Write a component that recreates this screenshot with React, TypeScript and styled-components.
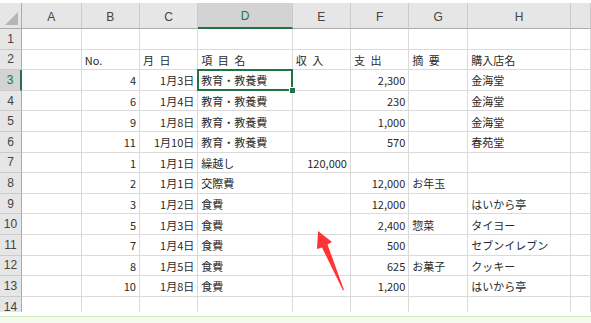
import React from "react";
import styled, { createGlobalStyle, css } from "styled-components";

const GlobalStyle = createGlobalStyle`
  html, body {
    margin: 0;
    padding: 0;
    background: #ffffff;
  }
`;

const headerBg = "#e6e6e6";
const activeHeaderBg = "#d3d3d3";
const excelGreen = "#217346";
const gridLine = "#dadada";

const columns = ["A", "B", "C", "D", "E", "F", "G", "H", ""];
const colWidths = "22px 59.7px 58.3px 58.3px 94.4px 58.3px 58.3px 59px 102.4px 1fr";

type Align = "left" | "right";
type RowData = (string | [string, Align])[];

// B..H for rows 1..14
const rows: RowData[] = [
  ["", "", "", "", "", "", ""],
  [["No.", "left"], ["月 日", "left"], "項 目 名", "収 入", ["支 出", "left"], "摘 要", "購入店名"],
  [["4", "right"], ["1月3日", "right"], "教育・教養費", "", ["2,300", "right"], "", "金海堂"],
  [["6", "right"], ["1月4日", "right"], "教育・教養費", "", ["230", "right"], "", "金海堂"],
  [["9", "right"], ["1月8日", "right"], "教育・教養費", "", ["1,000", "right"], "", "金海堂"],
  [["11", "right"], ["1月10日", "right"], "教育・教養費", "", ["570", "right"], "", "春苑堂"],
  [["1", "right"], ["1月1日", "right"], "繰越し", ["120,000", "right"], "", "", ""],
  [["2", "right"], ["1月1日", "right"], "交際費", "", ["12,000", "right"], "お年玉", ""],
  [["3", "right"], ["1月2日", "right"], "食費", "", ["12,000", "right"], "", "はいから亭"],
  [["5", "right"], ["1月3日", "right"], "食費", "", ["2,400", "right"], "惣菜", "タイヨー"],
  [["7", "right"], ["1月4日", "right"], "食費", "", ["500", "right"], "", "セブンイレブン"],
  [["8", "right"], ["1月5日", "right"], "食費", "", ["625", "right"], "お菓子", "クッキー"],
  [["10", "right"], ["1月8日", "right"], "食費", "", ["1,200", "right"], "", "はいから亭"],
  ["", "", "", "", "", "", ""],
];

const Page = styled.div`
  width: 591px;
  height: 323px;
  display: flex;
  flex-direction: column;
  padding-top: 3px;
  box-sizing: border-box;
  overflow: hidden;
  font-family: "Noto Sans CJK JP", "Noto Sans", sans-serif;
  position: relative;
`;

const SheetArea = styled.div`
  height: 308.7px;
  overflow: hidden;
  position: relative;
`;

const Sheet = styled.div`
  display: grid;
  grid-template-columns: ${colWidths};
  grid-template-rows: 26px;
  grid-auto-rows: 20.6px;
`;

const Corner = styled.div`
  background: ${headerBg};
  border-right: 1px solid #ababab;
  border-bottom: 1px solid #ababab;
  box-sizing: border-box;
  display: flex;
  align-items: flex-end;
  justify-content: flex-end;
  padding: 0 3px 3px 0;
`;

const CornerTriangle = styled.div`
  width: 0;
  height: 0;
  border-left: 13px solid transparent;
  border-bottom: 13px solid #b5b5b5;
`;

const ColHeader = styled.div<{ $active?: boolean }>`
  background: ${headerBg};
  border-right: 1px solid #cbcbcb;
  border-bottom: 1px solid #ababab;
  box-sizing: border-box;
  display: flex;
  align-items: center;
  justify-content: center;
  font-family: "Liberation Sans", "Noto Sans", sans-serif;
  font-size: 12px;
  color: #444;
  padding-top: 2px;
  ${(p) =>
    p.$active &&
    css`
      background: ${activeHeaderBg};
      color: ${excelGreen};
      border-bottom: 2px solid ${excelGreen};
    `}
`;

const RowHeader = styled.div<{ $active?: boolean }>`
  background: ${headerBg};
  border-right: 1px solid #ababab;
  border-bottom: 1px solid #cbcbcb;
  box-sizing: border-box;
  display: flex;
  align-items: center;
  justify-content: center;
  font-family: "Liberation Sans", "Noto Sans", sans-serif;
  font-size: 12px;
  color: #444;
  ${(p) =>
    p.$active &&
    css`
      background: ${activeHeaderBg};
      color: ${excelGreen};
      border-right: 2px solid ${excelGreen};
    `}
`;

const Cell = styled.div<{ $align: Align; $selected?: boolean }>`
  border-right: 1px solid ${gridLine};
  border-bottom: 1px solid ${gridLine};
  box-sizing: border-box;
  display: flex;
  align-items: center;
  justify-content: ${(p) => (p.$align === "right" ? "flex-end" : "flex-start")};
  padding: 1px 3px 0 3px;
  font-size: 11px;
  word-spacing: 3px;
  color: #2a2a2a;
  white-space: nowrap;
  overflow: visible;
  position: relative;
  ${(p) =>
    p.$selected &&
    css`
      &::after {
        content: "";
        position: absolute;
        left: -1px;
        top: -1px;
        right: -1px;
        bottom: -1px;
        border: 2px solid ${excelGreen};
        pointer-events: none;
      }
    `}
`;

const FillHandle = styled.span`
  position: absolute;
  right: -4px;
  bottom: -4px;
  width: 5px;
  height: 5px;
  background: ${excelGreen};
  border: 1px solid #ffffff;
  z-index: 2;
`;

const Arrow = styled.svg`
  position: absolute;
  left: 314px;
  top: 225px;
  pointer-events: none;
`;

const StatusBand = styled.div`
  margin-top: 4px;
  flex: 1;
  background: #f3faed;
  border-top: 1px solid #d3ecbd;
`;

export default function App() {
  return (
    <>
      <GlobalStyle />
      <Page>
        <SheetArea>
          <Sheet>
            <Corner>
              <CornerTriangle />
            </Corner>
            {columns.map((c, i) => (
              <ColHeader key={"h" + i} $active={c === "D"}>
                {c}
              </ColHeader>
            ))}
            {rows.map((row, r) => (
              <React.Fragment key={r}>
                <RowHeader $active={r === 2}>{r + 1}</RowHeader>
                <Cell $align="left" />
                {row.map((v, c) => {
                  const [text, align] = Array.isArray(v) ? v : [v, "left" as Align];
                  const selected = r === 2 && c === 2;
                  return (
                    <Cell key={c} $align={align} $selected={selected}>
                      {text}
                      {selected && <FillHandle />}
                    </Cell>
                  );
                })}
                <Cell $align="left" />
              </React.Fragment>
            ))}
          </Sheet>
        </SheetArea>
        <Arrow width="40" height="72" viewBox="0 0 40 72">
          <polygon
            points="4,6 18,17 13.5,19.5 30,65 29,65.5 8,22.5 3,24"
            fill="#ff3535"
          />
        </Arrow>
        <StatusBand />
      </Page>
    </>
  );
}
